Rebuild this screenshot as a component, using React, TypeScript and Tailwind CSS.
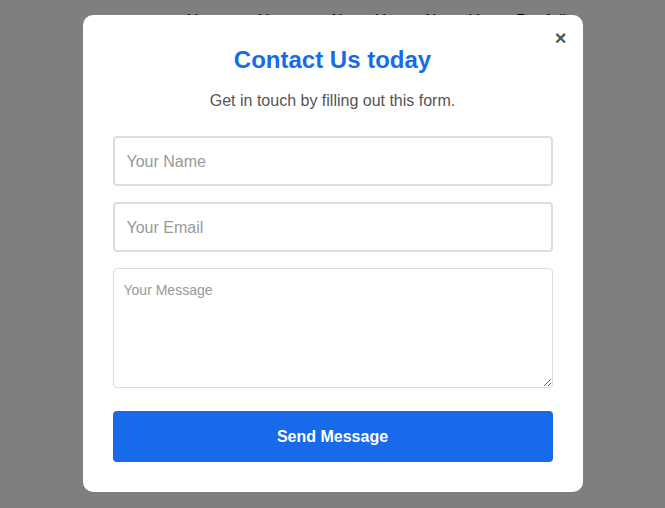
import React from "react";

export default function App() {
  return (
    <div className="relative h-[508px] w-[665px] overflow-hidden bg-white" style={{ fontFamily: '"Liberation Sans", Arial, sans-serif' }}>
      <nav className="flex gap-[28px] pl-[187px] pt-[9px] text-[16px] leading-[24px] text-black">
        <span>Home</span>
        <span>Home</span>
        <span>About Us</span>
        <span>About Us</span>
        <span>Portfolio</span>
      </nav>
      <div className="fixed inset-0 flex items-start justify-center bg-black/50 pt-[15px]">
        <div className="relative flex h-[477px] w-[500px] flex-col rounded-[10px] bg-white px-[30px] pt-[30px] pb-[30px]">
          <button className="absolute right-[16px] top-[11px] text-[20px] font-bold leading-[24px] text-[#555]">×</button>
          <h1 className="text-center text-[24px] font-bold leading-[29px] text-[#176bea]">Contact Us today</h1>
          <p className="mt-[15px] text-center text-[16px] leading-[24px] text-[#555]">Get in touch by filling out this form.</p>
          <form className="mt-[23px] flex flex-col gap-[16px]">
            <input
              type="text"
              placeholder="Your Name"
              className="h-[50px] w-full rounded-[4px] border-2 border-[#dddddd] px-[12px] pt-[2px] text-[16px] outline-none placeholder:text-[#999]"
            />
            <input
              type="email"
              placeholder="Your Email"
              className="h-[50px] w-full rounded-[4px] border-2 border-[#dddddd] px-[12px] pt-[2px] text-[16px] outline-none placeholder:text-[#999]"
            />
            <textarea
              placeholder="Your Message"
              className="h-[120px] w-full rounded-[4px] border border-[#dddddd] px-[10px] pt-[12px] pb-[10px] text-[14px] leading-[18px] outline-none placeholder:text-[#999]"
            />
          </form>
          <button className="mt-[23px] h-[51px] w-full rounded-[4px] bg-[#176bea] text-[16px] font-bold text-white">Send Message</button>
        </div>
      </div>
    </div>
  );
}
